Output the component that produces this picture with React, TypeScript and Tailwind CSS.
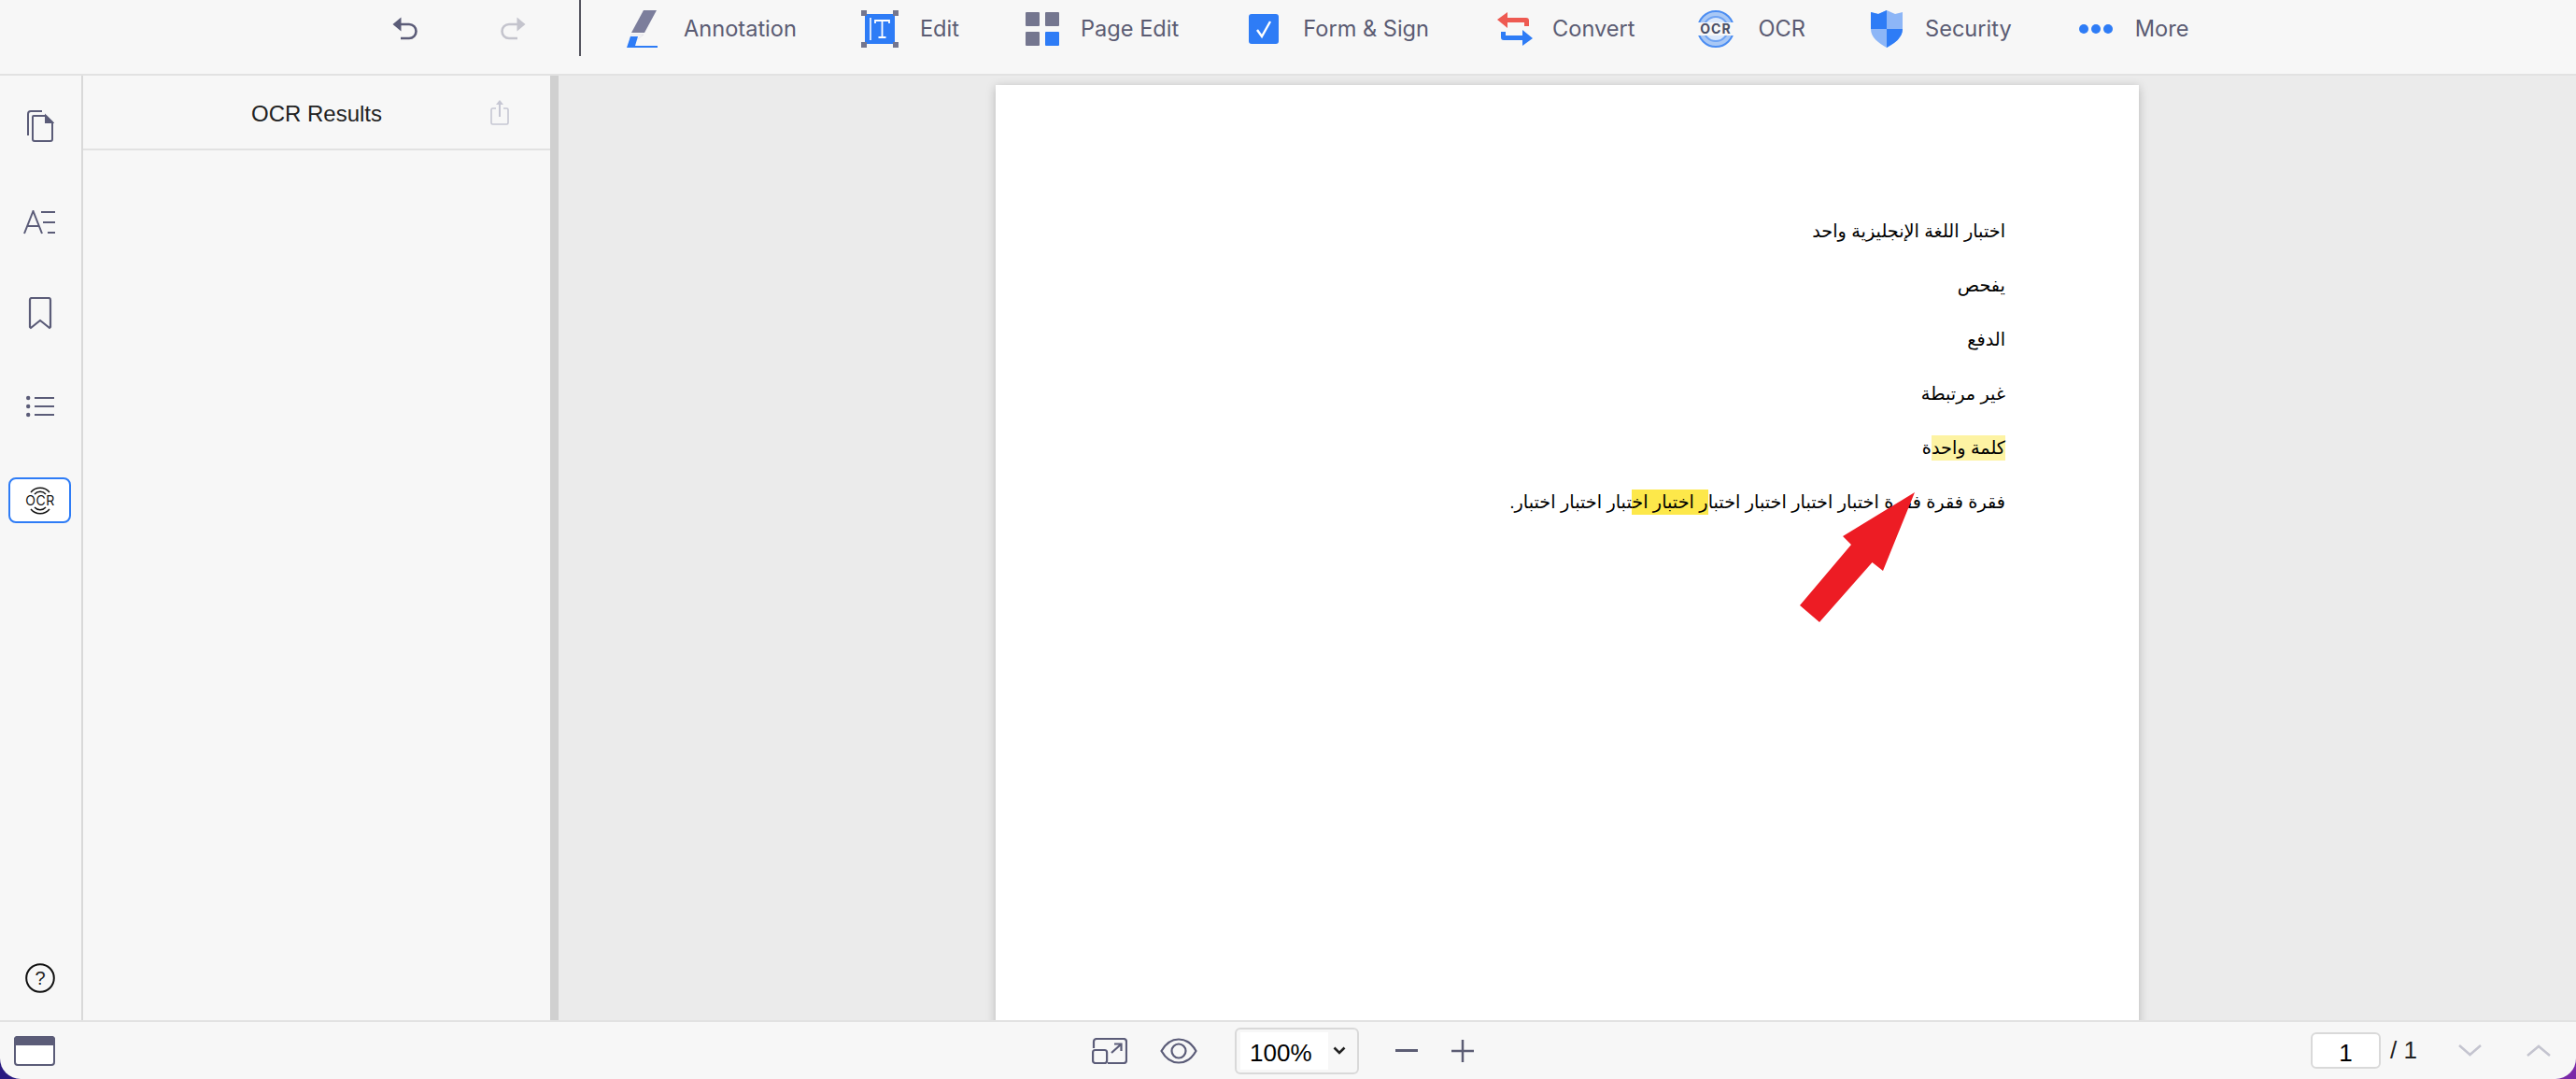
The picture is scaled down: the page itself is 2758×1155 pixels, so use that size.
import type { ReactNode } from "react";

const ink = "#5b5c78";

const ToolItem = ({ icon, label, className, labelClass }: { icon: ReactNode; label: string; className: string; labelClass: string }) => (
  <div className={`flex items-center shrink-0 h-[62px] ${className}`}>
    {icon}
    <span className={`text-[23.600px] leading-none text-[#5b5c73] whitespace-nowrap ${labelClass}`}>{label}</span>
  </div>
);

const OcrGlyph = ({ size = 40 }: { size?: number }) => (
  <svg width={size} height={size} viewBox="0 0 40 40" className="shrink-0">
    <circle cx="20" cy="20" r="19" fill="#a9c8f5" stroke="#4b8df2" strokeWidth="2" />
    <circle cx="20" cy="20" r="13" fill="#dbe8fb" stroke="#6ea3f3" strokeWidth="2" />
    <rect x="0" y="13" width="40" height="14" fill="#f7f7f7" />
    <text x="20" y="25" textAnchor="middle" fontSize="14" fontWeight="700" letterSpacing="1" fill="#4a4f66" fontFamily="Inter, sans-serif">OCR</text>
  </svg>
);

const Toolbar = () => (
  <header className="flex h-[81px] shrink-0 bg-[#f7f7f7] border-b-2 border-[#e2e2e2]">
    <div className="flex items-start pl-[420px] pt-[18px] h-[79px]">
      <svg width="28" height="26" viewBox="0 0 28 26" fill="none" className="shrink-0">
        <path d="M8 8h10a7.500 7.500 0 0 1 0 15H9" stroke={ink} strokeWidth="2.600" />
        <path d="M9.500 0.500v15L0.500 8z" fill={ink} />
      </svg>
      <svg width="28" height="26" viewBox="0 0 28 26" fill="none" className="shrink-0 ml-[87px]">
        <path d="M20 8H10a7.500 7.500 0 0 0 0 15h9" stroke="#c4c4cd" strokeWidth="2.600" />
        <path d="M18.500 0.500v15L27.500 8z" fill="#c4c4cd" />
      </svg>
    </div>
    <div className="w-[2px] h-[60px] bg-[#55555f] ml-[57px] shrink-0" />
    <div className="flex items-start h-[60px]">
      <ToolItem
        className="ml-[49px]"
        labelClass="ml-[28px]"
        label="Annotation"
        icon={
          <svg width="33" height="40" viewBox="0 0 33 40" className="shrink-0">
            <path d="M18 0h14L19 24H5z" fill="#7c7e9c" />
            <path d="M5 26h13l-6 5H3z" fill="#f4f4f6" stroke="#d7d7de" strokeWidth="0.500" />
            <path d="M4 28 0 40h33v-2H9l3-10z" fill="#2e7cf6" />
          </svg>
        }
      />
      <ToolItem
        className="ml-[69px]"
        labelClass="ml-[23px]"
        label="Edit"
        icon={
          <svg width="40" height="40" viewBox="0 0 40 40" className="shrink-0">
            <rect x="4" y="4" width="32" height="32" fill="#2e7cf6" />
            <path d="M0 0h6v6H0zM34 0h6v6h-6zM0 34h6v6H0zM34 34h6v6h-6z" fill="#74768f" />
            <path d="M10 8v24" stroke="#fff" strokeWidth="1.600" />
            <path d="M15 14v-3h15v3M22.500 11v18M18.500 29h8" stroke="#fff" strokeWidth="1.800" fill="none" />
          </svg>
        }
      />
      <ToolItem
        className="ml-[71px]"
        labelClass="ml-[23px]"
        label="Page Edit"
        icon={
          <svg width="36" height="36" viewBox="0 0 36 36" className="shrink-0">
            <rect width="15" height="15" rx="1" fill="#74768f" />
            <rect x="21" width="15" height="15" rx="1" fill="#74768f" />
            <rect y="21" width="15" height="15" rx="1" fill="#74768f" />
            <rect x="21" y="21" width="15" height="15" rx="1" fill="#2e7cf6" />
          </svg>
        }
      />
      <ToolItem
        className="ml-[75px]"
        labelClass="ml-[26px]"
        label="Form & Sign"
        icon={
          <svg width="32" height="32" viewBox="0 0 32 32" className="shrink-0">
            <rect width="32" height="32" rx="3" fill="#2e7cf6" />
            <path d="M9 17l5 7 9-16" stroke="#fff" strokeWidth="2.400" fill="none" />
          </svg>
        }
      />
      <ToolItem
        className="ml-[73px]"
        labelClass="ml-[21px]"
        label="Convert"
        icon={
          <svg width="38" height="36" viewBox="0 0 38 36" className="shrink-0">
            <path d="M11 0v6h20a3 3 0 0 1 3 3v6h-5v-4H11v6L0 8z" fill="#ee5a52" />
            <path d="M27 36v-6H7a3 3 0 0 1-3-3v-6h5v4h18v-6l11 9z" fill="#2e7cf6" />
          </svg>
        }
      />
      <ToolItem className="ml-[66px]" labelClass="ml-[26px]" label="OCR" icon={<OcrGlyph />} />
      <ToolItem
        className="ml-[70px]"
        labelClass="ml-[24px]"
        label="Security"
        icon={
          <svg width="34" height="40" viewBox="0 0 34 40" className="shrink-0">
            <path d="M0 2l8 2 9-4 9 4 8-2v18c0 9-8 15-17 20C8 35 0 29 0 20z" fill="#8db6f7" />
            <path d="M0 2l8 2 9-4v20H0zM17 20h17c0 9-8 15-17 20z" fill="#2e7cf6" />
          </svg>
        }
      />
      <ToolItem
        className="ml-[72px]"
        labelClass="ml-[24px]"
        label="More"
        icon={
          <svg width="36" height="12" viewBox="0 0 36 12" className="shrink-0">
            <circle cx="5" cy="6" r="5" fill="#2e7cf6" />
            <circle cx="18" cy="6" r="5" fill="#2e7cf6" />
            <circle cx="31" cy="6" r="5" fill="#2e7cf6" />
          </svg>
        }
      />
    </div>
  </header>
);

const Rail = () => (
  <aside className="w-[89px] shrink-0 bg-[#f7f7f7] border-r-2 border-[#d9d9d9] flex flex-col items-center">
    <svg width="30" height="34" viewBox="0 0 30 34" fill="none" stroke={ink} strokeWidth="2" className="mt-[37px] shrink-0 -translate-x-[1px]">
      <path d="M2 27V4a3 3 0 0 1 3-3h12" />
      <path d="M7 7a1 1 0 0 1 1-1h13l7 7v18a2 2 0 0 1-2 2H9a2 2 0 0 1-2-2z" />
      <path d="M21 6v7h7z" fill={ink} />
    </svg>
    <svg width="35" height="26" viewBox="0 0 35 26" fill="none" stroke={ink} strokeWidth="2" className="mt-[73px] shrink-0 -translate-x-[1px]">
      <path d="M1 25 10.500 1 20 25M4 17h13" />
      <path d="M19 2h15M21 13h13M26 24h8" />
    </svg>
    <svg width="26" height="35" viewBox="0 0 26 35" fill="none" stroke={ink} strokeWidth="2.200" className="mt-[67px] shrink-0 -translate-x-[1px]">
      <path d="M2 3a2 2 0 0 1 2-2h18a2 2 0 0 1 2 2v29l-1 1-10-8-10 8-1-1z" strokeLinejoin="round" />
    </svg>
    <svg width="30" height="24" viewBox="0 0 30 24" fill="none" className="mt-[70px] shrink-0 -translate-x-[1px]">
      <path d="M9 3h21M9 12h21M9 21h21" stroke={ink} strokeWidth="2.200" />
      <circle cx="2.200" cy="3" r="2.200" fill={ink} />
      <circle cx="2.200" cy="12" r="2.200" fill={ink} />
      <circle cx="2.200" cy="21" r="2.200" fill={ink} />
    </svg>
    <div className="mt-[64px] w-[67px] h-[49px] shrink-0 bg-white border-2 border-[#2e7cf6] rounded-[8px] flex items-center justify-center -translate-x-[1px]">
      <svg width="34" height="34" viewBox="0 0 34 34" fill="none" stroke="#111" strokeWidth="1.500">
        <path d="M7 8a13 13 0 0 1 20 0M11 10a8 8 0 0 1 12 0M7 26a13 13 0 0 0 20 0M11 24a8 8 0 0 0 12 0" />
        <text x="17" y="22" textAnchor="middle" fontSize="14" letterSpacing="0.600" fill="#111" stroke="none" fontFamily="Inter, sans-serif">OCR</text>
      </svg>
    </div>
    <svg width="32" height="32" viewBox="0 0 32 32" fill="none" className="mt-auto mb-[29px] shrink-0 -translate-x-[1px]">
      <circle cx="16" cy="16" r="14.800" stroke="#111" strokeWidth="2" />
      <text x="16" y="23" textAnchor="middle" fontSize="20" fill="#222" fontFamily="Liberation Sans, sans-serif">?</text>
    </svg>
  </aside>
);

const ResultsPanel = () => (
  <section className="w-[500px] shrink-0 bg-[#f7f7f7] border-r-[9px] border-[#d0d0d0] box-content">
    <div className="grid grid-cols-[1fr_auto_1fr] items-center h-[80px] border-b-2 border-[#e2e2e2]">
      <div />
      <h2 className="text-[24px] leading-none pt-[3px] text-[#222] font-['Liberation_Sans',sans-serif]">OCR Results</h2>
      <div className="flex justify-end pr-[44px]">
        <svg width="20" height="27" viewBox="0 0 20 27" fill="none" stroke="#c6c7d3" strokeWidth="1.600">
          <path d="M6 9H2.500A1.500 1.500 0 0 0 1 10.500V24.500A1.500 1.500 0 0 0 2.500 26h15a1.500 1.500 0 0 0 1.500-1.500V10.500A1.500 1.500 0 0 0 17.500 9H14" />
          <path d="M10 3v15" strokeWidth="2" />
          <path d="M10 0l4 5H6z" fill="#c6c7d3" stroke="none" />
        </svg>
      </div>
    </div>
  </section>
);

const arabicLine = "h-[28px] leading-[28px] mb-[30px] whitespace-nowrap";
const mark = "py-[3px] bg-[#fdf3a3]";
const markStrong = "py-[3px] bg-[#fde84a]";

const DocumentPage = () => (
  <div className="relative w-[1224px] h-[1100px] shrink-0 bg-white shadow-[0_2px_10px_rgba(0,0,0,0.22)] pt-[143px] pr-[143px] text-black text-[19.300px] text-right font-['Liberation_Sans','DejaVu_Sans',sans-serif]" dir="rtl">
    <p className={arabicLine}>اختبار اللغة الإنجليزية واحد</p>
    <p className={arabicLine}>يفحص</p>
    <p className={arabicLine}>الدفع</p>
    <p className={arabicLine}>غير مرتبطة</p>
    <p className={arabicLine}>
      <span className={mark}>كلمة واحد</span>ة
    </p>
    <p className={arabicLine}>
      فقرة فقرة فقرة اختبار اختبار اختبار اختبا
      <span className={markStrong}>ر اختبار اخ</span>
      تبار اختبار اختبار.
    </p>
    <svg width="123" height="139" viewBox="0 0 123 139" className="absolute left-[861px] top-[436px]">
      <path d="M123 0 46 47 55 56 0 121 21 139 77.500 75 89 84z" fill="#ed1c24" />
    </svg>
  </div>
);

const BottomBar = () => (
  <footer className="h-[63px] shrink-0 bg-[#f7f7f7] border-t-2 border-[#e2e2e2] flex items-center text-black font-['Liberation_Sans',sans-serif]">
    <svg width="44" height="32" viewBox="0 0 44 32" className="ml-[15px] shrink-0">
      <rect x="1" y="1" width="42" height="30" rx="3" fill="#fff" stroke={ink} strokeWidth="2" />
      <path d="M0 4a4 4 0 0 1 4-4h36a4 4 0 0 1 4 4v6H0z" fill={ink} />
    </svg>
    <svg width="38" height="28" viewBox="0 0 38 28" fill="none" stroke={ink} strokeWidth="2.200" className="ml-[1110px] shrink-0">
      <path d="M2 11V4a3 3 0 0 1 3-3h29a3 3 0 0 1 3 3v20a3 3 0 0 1-3 3H17" />
      <rect x="1.100" y="13" width="15" height="14" rx="2.500" />
      <path d="M21 16 31 7M24 6.500h7.500V14" />
    </svg>
    <svg width="40" height="28" viewBox="0 0 40 28" fill="none" stroke={ink} strokeWidth="2.200" className="ml-[35px] shrink-0">
      <path d="M1.500 14C6 6 12 1.500 20 1.500S34 6 38.500 14C34 22 28 26.500 20 26.500S6 22 1.500 14z" />
      <circle cx="20" cy="14" r="7.500" />
    </svg>
    <div className="ml-[40px] w-[133px] h-[50px] shrink-0 rounded-[6px] border-2 border-[#d9d9d9] flex items-center overflow-hidden">
      <span className="ml-[4px] w-[94px] h-[40px] bg-white pl-[10px] text-[26px] leading-[44px]">100%</span>
      <svg width="14" height="10" viewBox="0 0 14 10" fill="none" stroke="#222" strokeWidth="2.600" className="ml-[5px]">
        <path d="M1.500 1.500 7 7l5.500-5.500" />
      </svg>
    </div>
    <div className="ml-[39px] w-[24px] h-[2.500px] bg-[#5c5d74] shrink-0" />
    <svg width="24" height="24" viewBox="0 0 24 24" stroke="#5c5d74" strokeWidth="2.500" className="ml-[36px] shrink-0">
      <path d="M12 0v24M0 12h24" />
    </svg>
    <div className="ml-auto flex items-center pr-[27px]">
      <div className="w-[75px] h-[39px] bg-white border-2 border-[#d9d9d9] rounded-[6px] text-[26px] leading-[40px] text-center">1</div>
      <span className="ml-[10px] text-[26px] text-[#222]">/ 1</span>
      <svg width="25" height="13" viewBox="0 0 25 13" fill="none" stroke="#c4c4cf" strokeWidth="2.500" className="ml-[44px]">
        <path d="M1 1l11.500 10L24 1" />
      </svg>
      <svg width="26" height="13" viewBox="0 0 26 13" fill="none" stroke="#c4c4cf" strokeWidth="2.500" className="ml-[48px]">
        <path d="M1 12 13 2l12 10" />
      </svg>
    </div>
  </footer>
);

export default function App() {
  return (
    <div className="h-[1155px] w-[2758px] overflow-hidden bg-[linear-gradient(90deg,#2a1a80,#7a2aa8)]">
      <div className="h-full flex flex-col rounded-b-[22px] overflow-hidden font-['Inter',sans-serif]">
        <Toolbar />
        <div className="flex-1 flex min-h-0">
          <Rail />
          <ResultsPanel />
          <main className="flex-1 bg-[#ebebeb] flex justify-center pt-[10px] overflow-hidden">
            <DocumentPage />
          </main>
        </div>
        <BottomBar />
      </div>
    </div>
  );
}
